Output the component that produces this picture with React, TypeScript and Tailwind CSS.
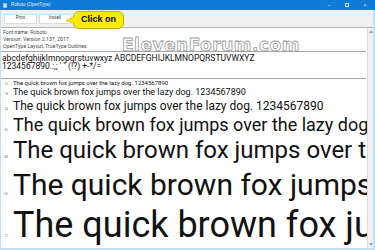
import React from "react";

const rows = [
  { label: "12", size: "text-[6px]", h: "h-[7px]", lh: "leading-[7px]" },
  { label: "18", size: "text-[9px]", h: "h-[12px]", lh: "leading-[12px]" },
  { label: "24", size: "text-[12px]", h: "h-[16px]", lh: "leading-[16px]" },
  { label: "36", size: "text-[18px]", h: "h-[22px]", lh: "leading-[22px]" },
  { label: "48", size: "text-[24px]", h: "h-[29px]", lh: "leading-[29px]" },
  { label: "60", size: "text-[30px]", h: "h-[39px]", lh: "leading-[39px]" },
  { label: "72", size: "text-[36px]", h: "h-[43px]", lh: "leading-[43px]" },
];

const sample = "The quick brown fox jumps over the lazy dog. 1234567890";

export default function App() {
  return (
    <div className="w-[375px] h-[250px] overflow-hidden bg-[#bfe0f5] flex flex-col font-['Roboto',sans-serif] relative">
      {/* title bar */}
      <div className="h-[10px] bg-[#0f7bd6] flex items-center shrink-0">
        <div className="w-[4px] h-[5px] ml-[3px] bg-[#dbe9f7] border border-[#8fb7df]" />
        <span className="ml-[4px] text-[4.5px] text-[#e6f0fa] leading-none font-['Liberation_Sans',sans-serif]">
          Roboto (OpenType)
        </span>
        <div className="ml-auto flex items-center text-[#d8e8f8] text-[5px] leading-none">
          <span className="w-[18px] text-center">–</span>
          <span className="w-[18px] flex justify-center">
            <span className="w-[4px] h-[4px] border border-[#d8e8f8]" />
          </span>
          <span className="w-[18px] text-center mr-[1px]">×</span>
        </div>
      </div>
      {/* body */}
      <div className="flex-1 flex flex-col pl-[1px] pr-[2px] pb-[2px] min-h-0">
        {/* toolbar */}
        <div className="h-[18px] shrink-0 bg-[#f0f0f0] border-b border-[#b4b4b4] flex items-center pl-[3px] gap-[2px]">
          <div className="w-[33px] h-[10px] bg-white border border-[#dcdcdc] flex items-center justify-center text-[4.5px] text-[#333] font-['Liberation_Sans',sans-serif]">
            Print
          </div>
          <div className="w-[32px] h-[10px] bg-white border border-[#dcdcdc] flex items-center justify-center text-[4.5px] text-[#333] font-['Liberation_Sans',sans-serif]">
            Install
          </div>
        </div>
        {/* content */}
        <div className="flex-1 flex min-h-0">
          <div className="flex-1 bg-white overflow-hidden relative">
            <div className="pt-[1px] pl-[2px] text-[5.2px] leading-[7px] text-[#4a4a4a]">
              <div>Font name: Roboto</div>
              <div>Version: Version 2.137; 2017</div>
              <div>OpenType Layout, TrueType Outlines</div>
            </div>
            <div className="h-[1px] bg-[#a8a8a8] mt-[1px] mr-[1px]" />
            <div className="pl-[1px] text-[8.5px] leading-[8.5px] text-[#111] whitespace-nowrap pt-[1.5px]">
              <div>abcdefghijklmnopqrstuvwxyz ABCDEFGHIJKLMNOPQRSTUVWXYZ</div>
              <div>1234567890.:,; ' " (!?) +-*/=</div>
            </div>
            <div className="h-[1px] bg-[#a8a8a8] mt-[7.5px] mr-[1px]" />
            <div>
              {rows.map((r) => (
                <div key={r.label} className={`flex items-baseline ${r.h}`}>
                  <span className="w-[12px] pl-[3px] text-[3.5px] leading-none text-[#888] shrink-0">
                    {r.label}
                  </span>
                  <span className={`${r.size} ${r.lh} text-[#111] whitespace-nowrap`}>{sample}</span>
                </div>
              ))}
            </div>
            {/* watermark */}
            <div className="absolute left-[121px] top-[9px] text-[17px] leading-none font-bold font-['DejaVu_Sans',sans-serif] text-white tracking-[0.5px] [-webkit-text-stroke:0.8px_#9a9a9a] whitespace-nowrap">
              ElevenForum.com
            </div>
          </div>
          {/* scrollbar */}
          <div className="w-[6px] bg-[#f0f0f0] border-l border-[#dcdcdc] flex flex-col items-center justify-between py-[2px]">
            <svg width="4" height="3" viewBox="0 0 4 3">
              <path d="M0 3 L2 0 L4 3 Z" fill="#a0a0a0" />
            </svg>
            <svg width="4" height="3" viewBox="0 0 4 3">
              <path d="M0 0 L2 3 L4 0 Z" fill="#a0a0a0" />
            </svg>
          </div>
        </div>
      </div>
      {/* callout */}
      <div className="absolute left-[66px] top-[11px] flex items-center">
        <svg width="8" height="8" viewBox="0 0 8 8" className="-mr-[1px] relative z-10">
          <path d="M8 1 L0 4.5 L8 7" fill="#ffeb00" stroke="#b9a800" strokeWidth="0.6" />
          <path d="M7.4 1.5 L7.4 6.5" stroke="#ffeb00" strokeWidth="1.4" />
        </svg>
        <div className="w-[51px] h-[18px] rounded-[6px] bg-[#ffeb00] border border-[#c2b000] flex items-center justify-center text-[9px] font-bold text-black font-['Liberation_Sans',sans-serif]">
          Click on
        </div>
      </div>
    </div>
  );
}
